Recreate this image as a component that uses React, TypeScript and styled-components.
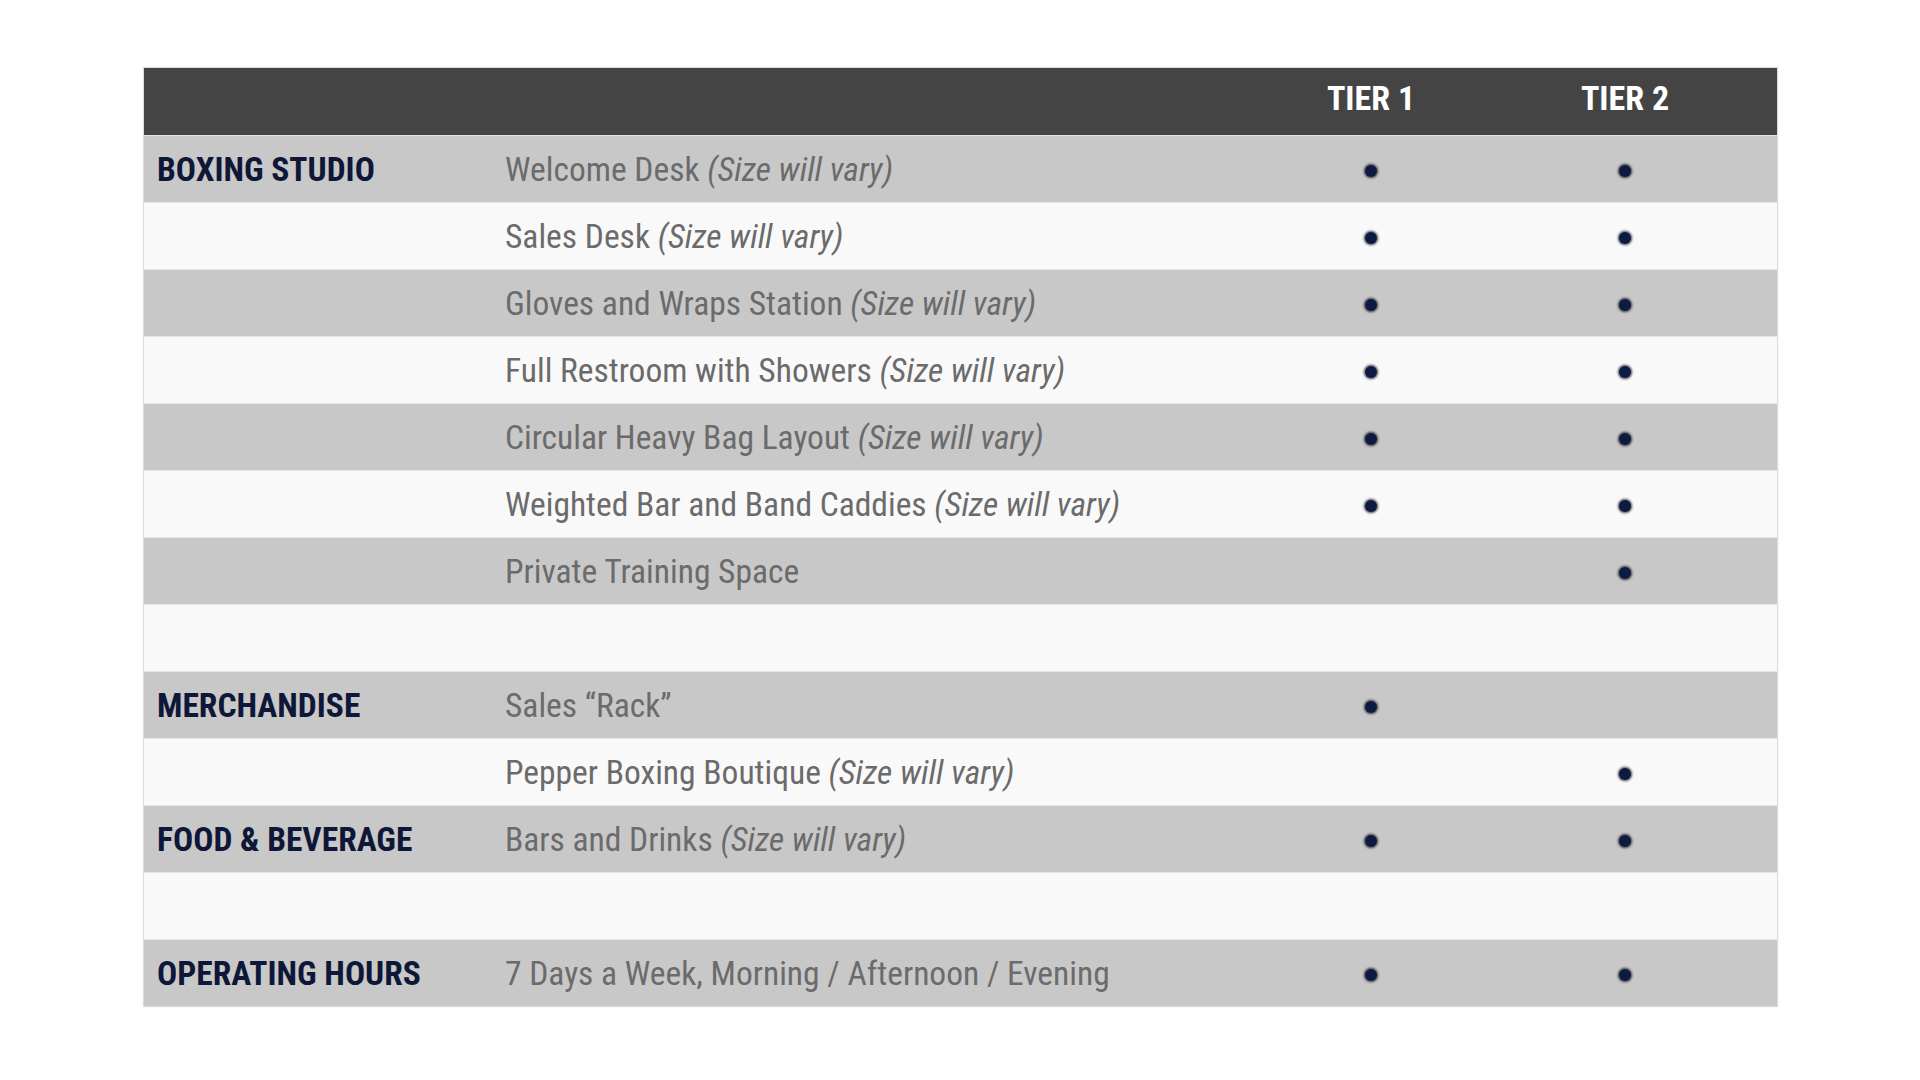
import React from "react";
import styled, { createGlobalStyle } from "styled-components";

const GlobalStyle = createGlobalStyle`
  html, body {
    margin: 0;
    padding: 0;
    background: #ffffff;
  }
  body {
    font-family: "Roboto Condensed", Roboto, "Liberation Sans", sans-serif;
  }
`;

const Page = styled.div`
  width: 1920px;
  height: 1080px;
  padding: 67px 0 0 143px;
  box-sizing: border-box;
`;

const Table = styled.div`
  width: 1635px;
  border: 1px solid #dcdcdc;
  box-sizing: border-box;
  box-shadow: 0 0 2px rgba(0, 0, 0, 0.08);
`;

const Row = styled.div<{ $shade: "head" | "gray" | "light" }>`
  display: grid;
  grid-template-columns: 348px 752px 254px 254px 1fr;
  align-items: center;
  height: 67px;
  box-sizing: border-box;
  background: ${(p) =>
    p.$shade === "head" ? "#444444" : p.$shade === "gray" ? "#c8c8c8" : "#faf9fa"};
  border-top: ${(p) => (p.$shade === "head" ? "none" : "1px solid #e3e3e3")};
`;

const HeadCell = styled.div`
  color: #ffffff;
  font-weight: 700;
  font-size: 34px;
  text-align: center;
  margin-top: -7px;
`;

const Category = styled.div`
  padding-left: 13px;
  color: #0f1738;
  font-weight: 700;
  font-size: 33.5px;
  white-space: nowrap;
`;

const Item = styled.div`
  padding-left: 13px;
  color: #6b6b6b;
  font-size: 33.5px;
  white-space: nowrap;

  em {
    font-style: italic;
  }
`;

const DotCell = styled.div`
  display: flex;
  justify-content: center;
  padding-top: 4px;
`;

const Dot = styled.span`
  width: 12px;
  height: 12px;
  border-radius: 50%;
  background: #0d1a42;
  box-shadow: 0 0 2px 1.5px rgba(20, 20, 30, 0.6);
`;

type Entry = {
  category?: string;
  item?: string;
  vary?: boolean;
  t1?: boolean;
  t2?: boolean;
};

const rows: Entry[] = [
  { category: "BOXING STUDIO", item: "Welcome Desk", vary: true, t1: true, t2: true },
  { item: "Sales Desk", vary: true, t1: true, t2: true },
  { item: "Gloves and Wraps Station", vary: true, t1: true, t2: true },
  { item: "Full Restroom with Showers", vary: true, t1: true, t2: true },
  { item: "Circular Heavy Bag Layout", vary: true, t1: true, t2: true },
  { item: "Weighted Bar and Band Caddies", vary: true, t1: true, t2: true },
  { item: "Private Training Space", t2: true },
  {},
  { category: "MERCHANDISE", item: "Sales \u201cRack\u201d", t1: true },
  { item: "Pepper Boxing Boutique", vary: true, t2: true },
  { category: "FOOD & BEVERAGE", item: "Bars and Drinks", vary: true, t1: true, t2: true },
  {},
  {
    category: "OPERATING HOURS",
    item: "7 Days a Week, Morning / Afternoon / Evening",
    t1: true,
    t2: true,
  },
];

export default function App() {
  return (
    <>
      <GlobalStyle />
      <Page>
        <Table>
          <Row $shade="head">
            <div />
            <div />
            <HeadCell>TIER 1</HeadCell>
            <HeadCell>TIER 2</HeadCell>
            <div />
          </Row>
          {rows.map((r, i) => (
            <Row key={i} $shade={i % 2 === 0 ? "gray" : "light"}>
              <Category>{r.category}</Category>
              <Item>
                {r.item}
                {r.vary && (
                  <>
                    {" "}
                    <em>(Size will vary)</em>
                  </>
                )}
              </Item>
              <DotCell>{r.t1 && <Dot />}</DotCell>
              <DotCell>{r.t2 && <Dot />}</DotCell>
              <div />
            </Row>
          ))}
        </Table>
      </Page>
    </>
  );
}
